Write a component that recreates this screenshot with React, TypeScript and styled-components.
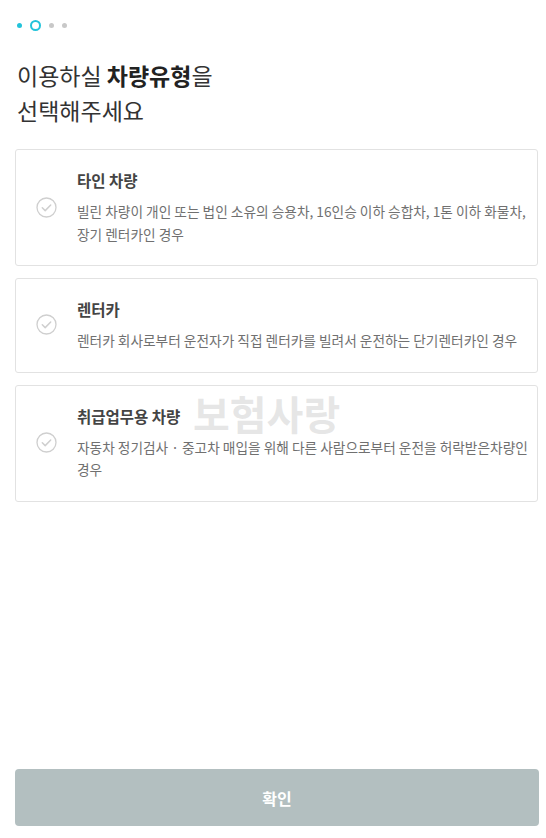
import React from 'react'
import styled, { createGlobalStyle } from 'styled-components'

const GlobalStyle = createGlobalStyle`
  html, body {
    margin: 0;
    padding: 0;
    background: #fff;
  }
  body {
    font-family: "Noto Sans CJK KR", "Noto Sans", sans-serif;
    color: #333;
  }
`

const Page = styled.div`
  position: relative;
  display: flex;
  flex-direction: column;
  min-height: 100vh;
  box-sizing: border-box;
  padding: 20px 8px 12px 15px;
`

const Steps = styled.div`
  display: flex;
  align-items: center;
  gap: 8px;
  height: 11px;
  padding-left: 2px;
`

const Dot = styled.span<{ $color: string }>`
  width: 5px;
  height: 5px;
  border-radius: 50%;
  background: ${p => p.$color};
`

const Ring = styled.span`
  width: 11px;
  height: 11px;
  box-sizing: border-box;
  border-radius: 50%;
  border: 2px solid #22c3da;
`

const Title = styled.h1`
  margin: 27px 0 21px 2px;
  font-size: 23px;
  line-height: 35px;
  font-weight: 400;
  color: #333;

  b {
    font-weight: 700;
    color: #222;
  }
`

const List = styled.ul`
  list-style: none;
  margin: 0;
  padding: 0;
  display: flex;
  flex-direction: column;
  gap: 12px;
`

const Card = styled.li`
  display: flex;
  align-items: center;
  gap: 20px;
  padding: 19px 4px 20px 20px;
  border: 1px solid #e2e2e2;
  border-radius: 3px;
  background: #fff;

  svg {
    flex-shrink: 0;
  }
`

const CardBody = styled.div`
  display: flex;
  flex-direction: column;
  gap: 9px;
`

const CardTitle = styled.strong`
  font-size: 15.5px;
  line-height: 22px;
  font-weight: 700;
  color: #444;
`

const CardDesc = styled.p`
  margin: 0;
  font-size: 13.7px;
  line-height: 22.5px;
  color: #707070;
  word-break: keep-all;
`

const Spacer = styled.div`
  flex: 1;
`

const ConfirmBtn = styled.button`
  height: 57px;
  margin-right: -1px;
  border: 0;
  border-radius: 4px;
  background: #b3bfc0;
  color: #fff;
  font-family: inherit;
  font-size: 16px;
  font-weight: 700;
  cursor: pointer;
`

const Watermark = styled.div`
  position: absolute;
  top: 390px;
  left: 193px;
  font-size: 40px;
  line-height: 46px;
  font-weight: 700;
  color: rgba(200, 200, 200, 0.45);
  pointer-events: none;
`

const CheckIcon = () => (
  <svg width="21" height="21" viewBox="0 0 21 21" fill="none">
    <circle cx="10.5" cy="10.5" r="9.5" stroke="#cfcfcf" strokeWidth="1.3" />
    <path d="M6.3 10.8l2.9 2.8 5.5-5.6" stroke="#cfcfcf" strokeWidth="1.5" strokeLinecap="round" strokeLinejoin="round" />
  </svg>
)

type VehicleType = {
  title: string
  desc: string
}

const types: VehicleType[] = [
  {
    title: '타인 차량',
    desc: '빌린 차량이 개인 또는 법인 소유의 승용차, 16인승 이하 승합차, 1톤 이하 화물차, 장기 렌터카인 경우',
  },
  {
    title: '렌터카',
    desc: '렌터카 회사로부터 운전자가 직접 렌터카를 빌려서 운전하는 단기렌터카인 경우',
  },
  {
    title: '취급업무용 차량',
    desc: '자동차 정기검사 · 중고차 매입을 위해 다른 사람으로부터 운전을 허락받은차량인 경우',
  },
]

export default function App() {
  return (
    <Page>
      <GlobalStyle />
      <Steps>
        <Dot $color="#22c3da" />
        <Ring />
        <Dot $color="#c8c8c8" />
        <Dot $color="#c8c8c8" />
      </Steps>

      <Title>
        이용하실 <b>차량유형</b>을
        <br />
        선택해주세요
      </Title>

      <List>
        {types.map(t => (
          <Card key={t.title}>
            <CheckIcon />
            <CardBody>
              <CardTitle>{t.title}</CardTitle>
              <CardDesc>{t.desc}</CardDesc>
            </CardBody>
          </Card>
        ))}
      </List>

      <Spacer />

      <ConfirmBtn type="button">확인</ConfirmBtn>

      <Watermark>보험사랑</Watermark>
    </Page>
  )
}
